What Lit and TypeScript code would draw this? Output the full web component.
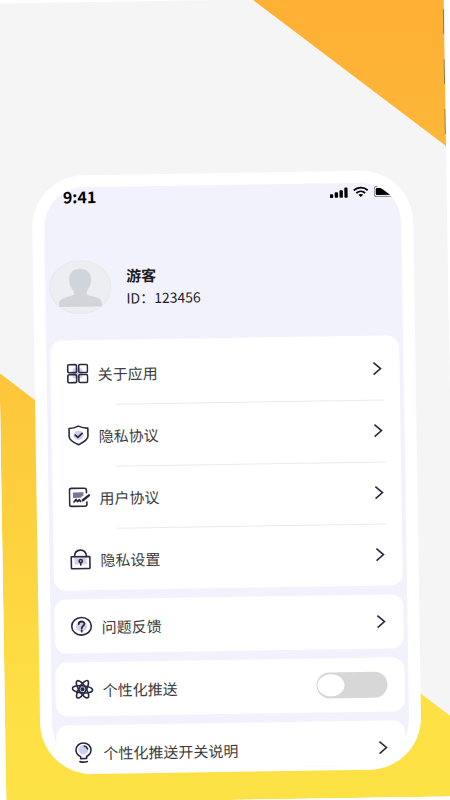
import { LitElement, html, svg, css, TemplateResult } from "lit";
import { customElement, property, state } from "lit/decorators.js";

const icons: Record<string, TemplateResult> = {
  grid: svg`
    <rect class="tint" x="6" y="6" width="10" height="10" rx="2"/>
    <rect x="1.2" y="2.3" width="8.8" height="8" rx="1.4"/>
    <rect x="12.2" y="2.3" width="8.8" height="8" rx="1.4"/>
    <rect x="1.2" y="12.3" width="8.8" height="8" rx="1.4"/>
    <rect x="12.2" y="12.3" width="8.8" height="8" rx="1.4"/>`,
  shield: svg`
    <ellipse class="tint" cx="11" cy="11" rx="5" ry="4.6"/>
    <path d="M11 1.8c3 1.5 6 2.2 9.4 2.2v8.2c0 3.4-4.2 5.8-9.4 8.2c-5.2-2.4-9.4-4.8-9.4-8.2V4C5 4 8 3.3 11 1.8z"/>
    <path class="bold" d="M7.8 10.8l2.5 2.2l4.3-3.8"/>`,
  agreement: svg`
    <path class="shade" d="M4.5 6h10.5v3l-3 2.5h-7.5z"/>
    <path d="M18 6.5V4a2 2 0 0 0-2-2H3a2 2 0 0 0-2 2v14a2 2 0 0 0 2 2h13.500a1.8 1.8 0 0 0 1.8-1.8v-2.4"/>
    <path class="bold" d="M5.5 15.5l2-2.3l1.500 2l1.7-1.7l1.3 1.5"/>
    <path class="pen" d="M14.3 14l6.2-4.8"/>`,
  lock: svg`
    <rect class="tint" x="5" y="9" width="12" height="7"/>
    <rect x="1.8" y="8.3" width="18.6" height="12" rx=".6"/>
    <path d="M5 8.2C5.3 4 7.8 1.8 11 1.8S16.8 4 17.2 8.2"/>
    <circle cx="11.2" cy="12.8" r="1.6"/>
    <path d="M11.2 14.5v2.3"/>`,
  question: svg`
    <ellipse class="tint" cx="11" cy="11" rx="5.5" ry="5"/>
    <ellipse cx="11" cy="11" rx="9.8" ry="8.8"/>
    <path class="bold" d="M8.3 8.8c0-3.4 5.6-3.3 5.6-.4c0 2.2-2.8 2.2-2.8 4.8M11.1 15.300v.9"/>`,
  atom: svg`
    <ellipse class="tint" cx="11" cy="11" rx="5" ry="4.6"/>
    <ellipse cx="11" cy="11" rx="10.2" ry="3.6" transform="rotate(6 11 11)"/>
    <ellipse cx="11" cy="11" rx="10" ry="3.5" transform="rotate(58 11 11)"/>
    <ellipse cx="11" cy="11" rx="10" ry="3.5" transform="rotate(122 11 11)"/>
    <circle class="dot" cx="11" cy="11" r="2"/>`,
  bulb: svg`
    <ellipse class="tint" cx="11" cy="8.5" rx="5" ry="4.8"/>
    <path d="M8 17.3v-2c-2.600-1.500-4.500-3.500-4.500-6.500C3.500 4.600 6.800 1.800 11 1.800s7.500 2.800 7.500 7c0 3-1.900 5-4.500 6.500v2z"/>
    <path d="M7.3 20.3c2.5.8 5 .8 7.4 0M12 4.800c1.600.3 2.700 1.300 3 2.900"/>`,
};

const sharedRow = css`
  .row {
    display: flex;
    align-items: center;
    gap: 9px;
    width: 100%;
    box-sizing: border-box;
    padding: 0 17px 0 16px;
    border: 0;
    background: none;
    color: #3c3c3e;
    font: 15px/22px "Noto Sans CJK SC", sans-serif;
    text-align: left;
  }
  .label {
    flex: 1;
    padding-top: 1px;
  }
  .icon {
    width: 22px;
    height: 22px;
    flex: none;
    fill: none;
    stroke: #29283f;
    stroke-width: 1.6;
    stroke-linecap: round;
    stroke-linejoin: round;
  }
  .tint {
    fill: #cdd0ec;
    stroke: none;
  }
  .shade {
    fill: #77789a;
    stroke: none;
  }
  .bold {
    stroke-width: 1.8;
  }
  .pen {
    stroke-width: 2.4;
  }
  .dot {
    fill: #29283f;
    stroke: none;
  }
`;

@customElement("menu-row")
export class MenuRow extends LitElement {
  @property() icon = "";
  @property() label = "";

  static styles = [
    sharedRow,
    css`
      :host {
        display: flex;
      }
      .chevron {
        width: 10px;
        height: 14px;
        flex: none;
        fill: none;
        stroke: #29283f;
        stroke-width: 1.6;
      }
    `,
  ];

  render() {
    return html`
      <button class="row" type="button">
        <svg class="icon" viewBox="0 0 22 22" aria-hidden="true">${icons[this.icon]}</svg>
        <span class="label">${this.label}</span>
        <svg class="chevron" viewBox="0 0 10 14" aria-hidden="true">
          <path d="M1 1l7 6l-7 6" />
        </svg>
      </button>
    `;
  }
}

@customElement("switch-row")
export class SwitchRow extends LitElement {
  @property() icon = "";
  @property() label = "";
  @state() private on = false;

  static styles = [
    sharedRow,
    css`
      :host {
        display: flex;
      }
      .switch {
        appearance: none;
        display: flex;
        flex: none;
        box-sizing: border-box;
        width: 71px;
        height: 26px;
        margin: 0;
        padding: 2px 1px;
        border-radius: 13px;
        background: #d7d7d7;
      }
      .switch::before {
        content: "";
        width: 27px;
        height: 22px;
        border-radius: 50%;
        background: #fff;
      }
      .switch:checked {
        justify-content: flex-end;
        background: #fdc83b;
      }
    `,
  ];

  render() {
    return html`
      <label class="row">
        <svg class="icon" viewBox="0 0 22 22" aria-hidden="true">${icons[this.icon]}</svg>
        <span class="label">${this.label}</span>
        <input
          class="switch"
          type="checkbox"
          role="switch"
          .checked=${this.on}
          @change=${(e: Event) => (this.on = (e.target as HTMLInputElement).checked)}
        />
      </label>
    `;
  }
}

@customElement("app-root")
export class AppRoot extends LitElement {
  private main = [
    { icon: "grid", label: "关于应用" },
    { icon: "shield", label: "隐私协议" },
    { icon: "agreement", label: "用户协议" },
    { icon: "lock", label: "隐私设置" },
  ];

  static styles = css`
    :host {
      display: block;
      height: 100vh;
      overflow: hidden;
      background: #fff;
      font-family: "Noto Sans CJK SC", sans-serif;
    }
    .poster {
      position: relative;
      display: flex;
      height: 100%;
      box-sizing: border-box;
      padding: 173px 34px 28px 35px;
      background: #f5f5f5;
      transform: rotate(-0.9deg);
    }
    .backdrop {
      position: absolute;
      inset: 0;
      background: linear-gradient(#ffb034, #fcb738 19%, #fdc53b 46%, #fdd43f 70%, #fde044 88%, #fde245);
      clip-path: polygon(57.5% 0, 100% 0, 100% 18.7%, 57.5% 0, 0 46.2%, 100% 90.4%, 100% 100%, 0 100%, 0 46.2%);
    }
    .edge {
      position: absolute;
      top: 0;
      right: 0;
      width: 1px;
      height: 18.7%;
      opacity: 0.6;
      background: repeating-linear-gradient(#fcb434 0 12px, #5d4a2c 12px 37px, #fcb434 37px 50px);
    }
    .phone {
      position: relative;
      flex: 1;
      min-width: 0;
      box-sizing: border-box;
      border: solid #fff;
      border-width: 12px 12px 4px;
      border-radius: 52px;
      background: #f2f2fc;
      overflow: hidden;
    }
    .status {
      display: flex;
      align-items: center;
      gap: 5px;
      height: 18px;
      padding: 0 3px 0 19px;
    }
    .time {
      flex: 1;
      color: #000;
      font-size: 16px;
      line-height: 18px;
      font-weight: 700;
    }
    .glyph {
      height: 12px;
      flex: none;
    }
    .signal {
      width: 18px;
    }
    .wifi {
      width: 16px;
    }
    .battery {
      width: 24px;
    }
    .profile {
      display: flex;
      align-items: center;
      gap: 15px;
      padding: 55px 4px 26px;
    }
    .avatar {
      width: 62px;
      height: 54px;
      flex: none;
    }
    .name,
    .uid {
      margin: 0;
      color: #1c1c1e;
      font-size: 14px;
      line-height: 23px;
      font-weight: 400;
    }
    .name {
      font-size: 15px;
      font-weight: 700;
    }
    .cards {
      display: flex;
      flex-direction: column;
      gap: 9px;
      padding: 0 4px;
    }
    .card {
      border-radius: 12px;
      background: #fff;
    }
    .group {
      padding-top: 2px;
    }
    .item {
      display: flex;
      flex-direction: column;
      justify-content: center;
      height: 62px;
      position: relative;
    }
    .item + .item::before {
      content: "";
      position: absolute;
      top: 0;
      left: 64px;
      right: 15px;
      height: 1px;
      background: #ebebed;
    }
    .single {
      display: flex;
      flex-direction: column;
      justify-content: center;
      height: 54px;
    }
  `;

  render() {
    return html`
      <main class="poster">
        <div class="backdrop"></div>
        <div class="edge"></div>
        <section class="phone">
          <div class="status">
            <span class="time">9:41</span>
            <svg class="glyph signal" viewBox="0 0 18 12" aria-hidden="true">
              <rect x="0" y="8" width="3.4" height="3.600" rx="1" />
              <rect x="4.900" y="6" width="3.4" height="5.600" rx="1" />
              <rect x="9.700" y="4" width="3.4" height="7.600" rx="1" />
              <rect x="14.600" y="1.500" width="3.4" height="10.100" rx="1" />
            </svg>
            <svg class="glyph wifi" viewBox="0 0 16 12" aria-hidden="true">
              <path d="M1 4.500c4-3.600 10-3.600 14 0M3.600 7.200c2.600-2.300 6.200-2.300 8.800 0" fill="none" stroke="#000" stroke-width="1.800" />
              <path d="M8 11.200L5.600 8.900c1.400-1.100 3.400-1.100 4.800 0z" />
            </svg>
            <svg class="glyph battery" viewBox="0 0 24 12" aria-hidden="true">
              <rect x=".5" y="1" width="21" height="10" rx="2.500" fill="none" stroke="#8b8b90" />
              <rect x="2" y="2.500" width="18" height="7" rx="1.300" />
            </svg>
          </div>

          <header class="profile">
            <svg class="avatar" viewBox="0 0 62 54" role="img" aria-label="头像">
              <ellipse cx="31" cy="27" rx="30.500" ry="26.500" fill="#eceef2" stroke="#e7e8ed" />
              <path
                fill="#d1d5db"
                d="M31 8.500c6.500 0 11 4.500 11 10.500c0 5-1.700 9-4.600 12v3.200c1.500 2.400 13.800 2.200 15 7.800v4.500H9.600V42c1.200-5.600 13.500-5.400 15-7.800V31C21.700 28 20 24 20 19C20 13 24.500 8.500 31 8.500z"
              />
            </svg>
            <div>
              <h1 class="name">游客</h1>
              <p class="uid">ID：123456</p>
            </div>
          </header>

          <nav class="cards">
            <div class="card group">
              ${this.main.map(
                (m) => html`<div class="item"><menu-row icon=${m.icon} label=${m.label}></menu-row></div>`
              )}
            </div>
            <div class="card single"><menu-row icon="question" label="问题反馈"></menu-row></div>
            <div class="card single"><switch-row icon="atom" label="个性化推送"></switch-row></div>
            <div class="card single"><menu-row icon="bulb" label="个性化推送开关说明"></menu-row></div>
          </nav>
        </section>
      </main>
    `;
  }
}
